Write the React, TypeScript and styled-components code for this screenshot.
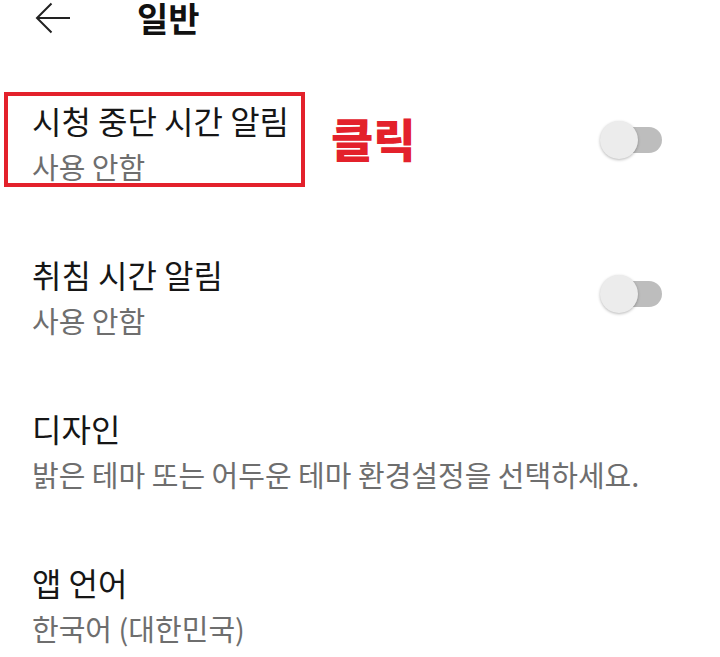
import React from 'react'
import styled, { createGlobalStyle } from 'styled-components'

const GlobalStyle = createGlobalStyle`
	html, body {
		margin: 0;
		padding: 0;
		background: #ffffff;
		font-family: 'Noto Sans CJK KR', 'Noto Sans', sans-serif;
	}
`

const Page = styled.div`
	width: 720px;
	min-height: 657px;
	background: #ffffff;
`

const Header = styled.div`
	height: 42px;
	display: flex;
	align-items: flex-start;
	padding-left: 35px;
`

const BackButton = styled.div`
	width: 36px;
	height: 32px;
	display: flex;
	align-items: center;
	margin-top: 2px;
`

const HeaderTitle = styled.h1`
	margin: -2px 0 0 66px;
	font-size: 34px;
	line-height: 40px;
	font-weight: 700;
	color: #111111;
`

const List = styled.div`
	display: flex;
	flex-direction: column;
	padding-top: 21px;
`

const Row = styled.div`
	display: flex;
	align-items: center;
	padding: 29px 58px 30px 4px;
`

const TextBlock = styled.div<{ $highlight?: boolean }>`
	display: flex;
	flex-direction: column;
	border: 4px solid ${(p) => (p.$highlight ? '#e3212b' : 'transparent')};
	padding: 8px 12px 1px 24px;
`

const Title = styled.div`
	font-size: 32px;
	line-height: 36px;
	color: #161616;
	white-space: nowrap;
	margin-top: -2px;
`

const Subtitle = styled.div`
	margin-top: 12px;
	font-size: 29px;
	line-height: 32px;
	color: #6e6e6e;
	white-space: nowrap;
`

const Annotation = styled.span`
	margin-left: 26px;
	font-size: 46px;
	line-height: 50px;
	font-weight: 900;
	color: #e3212b;
	margin-top: -6px;
`

const Spacer = styled.div`
	flex: 1;
`

const Switch = styled.div`
	position: relative;
	width: 62px;
	height: 38px;
	flex-shrink: 0;
`

const Track = styled.div`
	position: absolute;
	left: 7px;
	top: 6px;
	width: 55px;
	height: 26px;
	border-radius: 13px;
	background: #bdbdbd;
`

const Thumb = styled.div`
	position: absolute;
	left: 0;
	top: 0;
	width: 38px;
	height: 38px;
	border-radius: 50%;
	background: #ececec;
	box-shadow: 0 1px 3px rgba(0, 0, 0, 0.28);
`

const Toggle = () => (
	<Switch>
		<Track />
		<Thumb />
	</Switch>
)

const BackArrow = () => (
	<svg width='36' height='32' viewBox='0 0 36 32' fill='none' stroke='#222' strokeWidth='2'>
		<path d='M2 16H35' />
		<path d='M16.5 1.5L2 16L16.5 30.5' />
	</svg>
)

type SettingT = {
	title: string
	subtitle: string
	toggle?: boolean
	highlight?: boolean
}

const settings: SettingT[] = [
	{ title: '시청 중단 시간 알림', subtitle: '사용 안함', toggle: true, highlight: true },
	{ title: '취침 시간 알림', subtitle: '사용 안함', toggle: true },
	{ title: '디자인', subtitle: '밝은 테마 또는 어두운 테마 환경설정을 선택하세요.' },
	{ title: '앱 언어', subtitle: '한국어 (대한민국)' },
]

const App = () => {
	return (
		<Page>
			<GlobalStyle />
			<Header>
				<BackButton>
					<BackArrow />
				</BackButton>
				<HeaderTitle>일반</HeaderTitle>
			</Header>
			<List>
				{settings.map((s) => (
					<Row key={s.title}>
						<TextBlock $highlight={s.highlight}>
							<Title>{s.title}</Title>
							<Subtitle>{s.subtitle}</Subtitle>
						</TextBlock>
						{s.highlight && <Annotation>클릭</Annotation>}
						<Spacer />
						{s.toggle && <Toggle />}
					</Row>
				))}
			</List>
		</Page>
	)
}

export default App
